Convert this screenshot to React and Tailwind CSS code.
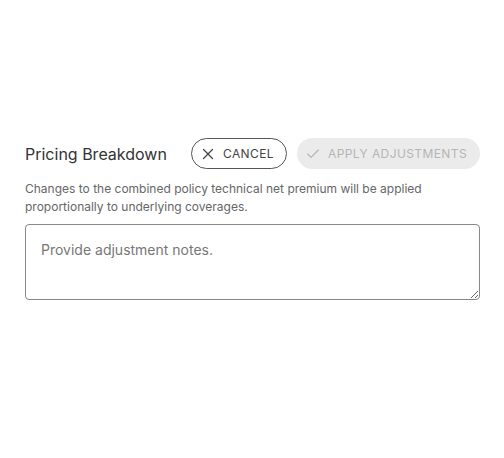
import { X, Check } from "lucide-react";

export default function App() {
  return (
    <div className="min-h-screen bg-white pl-[25px] pr-[24px] pt-[138px] font-[family-name:Inter,sans-serif] text-[#333]">
      {/* Header row */}
      <div className="flex items-center justify-between">
        <h2 className="text-[16px] leading-none text-[#333]">Pricing Breakdown</h2>
        <div className="flex gap-[10px]">
          <button className="flex h-[31px] items-center gap-[6px] rounded-full border border-[#555] pl-[7px] pr-[12px] text-[12px] tracking-[0.4px] text-[#444]">
            <X size={18} strokeWidth={1.6} />
            CANCEL
          </button>
          <button
            disabled
            className="flex h-[31px] items-center gap-[7px] rounded-full bg-[#ebebeb] pl-[8px] pr-[13px] text-[12px] tracking-[0.4px] text-[#b5b5b5]"
          >
            <Check size={16} strokeWidth={1.75} />
            APPLY ADJUSTMENTS
          </button>
        </div>
      </div>

      <p className="mt-[11px] text-[12px] leading-[18px] text-[#666]">
        Changes to the combined policy technical net premium will be applied proportionally to underlying coverages.
      </p>

      {/* Notes */}
      <textarea
        placeholder="Provide adjustment notes."
        className="mt-[8px] block h-[76px] w-full rounded-[4px] border border-[#888] px-[15px] pt-[15px] pb-[12px] text-[14px] leading-[20px] outline-none placeholder:text-[#777]"
      />
    </div>
  );
}
